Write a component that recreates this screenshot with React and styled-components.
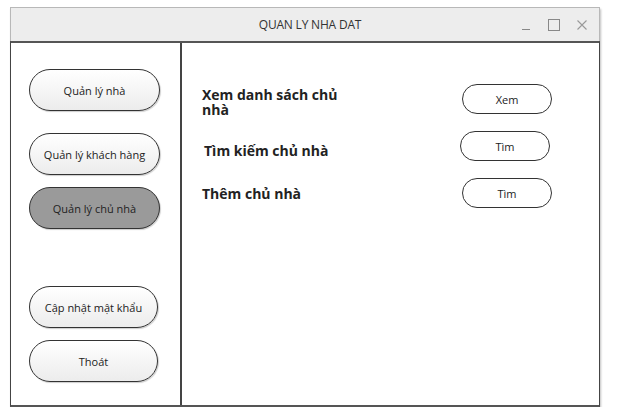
import styled, { createGlobalStyle } from "styled-components";

const GlobalStyle = createGlobalStyle`
  body {
    margin: 0;
    background: #fff;
    font-family: "Open Sans", "Noto Sans", sans-serif;
    color: #222;
  }
`;

const Window = styled.div`
  margin: 7px 0 0 10px;
  width: 590px;
  box-shadow: 1px 2px 2px rgba(0, 0, 0, 0.25);
`;

const TitleBar = styled.div`
  position: relative;
  height: 33px;
  background: #ededed;
  border: 1px solid #b8b8b8;
  border-bottom: none;
  display: flex;
  align-items: center;
  justify-content: center;
  font-size: 12px;
  color: #333;
`;

const Title = styled.span`
  margin-left: 10px;
  letter-spacing: -0.2px;
`;

const Controls = styled.div`
  position: absolute;
  right: 11px;
  top: 0;
  height: 100%;
  display: flex;
  align-items: center;
  gap: 15px;
  color: #999;
`;

const Body = styled.div`
  display: flex;
  height: 362px;
  border: 1px solid #444;
  border-top: 2px solid #555;
  border-bottom: 2px solid #555;
  background: #fff;
`;

const Sidebar = styled.div`
  width: 171px;
  border-right: 2px solid #444;
  display: flex;
  flex-direction: column;
  padding: 25px 0 0 18px;
  box-sizing: border-box;
`;

const MenuButton = styled.button`
  width: ${({ $w }) => $w || 131}px;
  height: 42px;
  margin-top: ${({ $mt }) => $mt || 0}px;
  border: 1px solid #333;
  border-radius: 21px;
  background: ${({ $active }) =>
    $active ? "#9a9a9a" : "linear-gradient(#ffffff, #ececec)"};
  box-shadow: 1px 1px 1px rgba(0, 0, 0, 0.2);
  font-family: "Open Sans", "Noto Sans", sans-serif;
  font-size: 11px;
  color: #222;
  padding: 0;
`;

const Content = styled.div`
  flex: 1;
  padding: 40px 0 0 20px;
  display: flex;
  flex-direction: column;
`;

const Row = styled.div`
  display: flex;
  align-items: center;
  margin-top: ${({ $mt }) => $mt || 0}px;
  height: 30px;
`;

const Label = styled.div`
  width: ${({ $w }) => $w}px;
  padding-left: ${({ $pl }) => $pl || 0}px;
  padding-top: ${({ $pt }) => $pt || 0}px;
  font-size: 14px;
  font-weight: 700;
  line-height: 15px;
  color: #222;
  box-sizing: border-box;
`;

const ActionButton = styled.button`
  width: 90px;
  height: 30px;
  margin-left: ${({ $ml }) => $ml}px;
  border: 1px solid #333;
  border-radius: 15px;
  background: #fff;
  font-family: "Open Sans", "Noto Sans", sans-serif;
  font-size: 11px;
  color: #222;
  padding: 0;
`;

export default function App() {
  return (
    <>
      <GlobalStyle />
      <Window>
        <TitleBar>
          <Title>QUAN LY NHA DAT</Title>
          <Controls>
            <svg width="12" height="12" viewBox="0 0 12 12">
              <path d="M2 10.5h8" stroke="#888" strokeWidth="1" />
            </svg>
            <svg width="14" height="14" viewBox="0 0 14 14">
              <rect x="1.5" y="1.5" width="11" height="11" fill="none" stroke="#888" />
            </svg>
            <svg width="12" height="12" viewBox="0 0 12 12">
              <path d="M1.5 1.5l9 9M10.5 1.5l-9 9" stroke="#999" strokeWidth="1.1" />
            </svg>
          </Controls>
        </TitleBar>
        <Body>
          <Sidebar>
            <MenuButton $mt={1}>Quản lý nhà</MenuButton>
            <MenuButton $mt={22}>Quản lý khách hàng</MenuButton>
            <MenuButton $mt={12} $active>Quản lý chủ nhà</MenuButton>
            <MenuButton $mt={57} $w={129}>Cập nhật mật khẩu</MenuButton>
            <MenuButton $mt={12} $w={129}>Thoát</MenuButton>
          </Sidebar>
          <Content>
            <Row $mt={1}>
              <Label $w={150} $pt={5}>Xem danh sách chủ nhà</Label>
              <ActionButton $ml={110}>Xem</ActionButton>
            </Row>
            <Row $mt={17}>
              <Label $w={150} $pl={2} $pt={8}>Tìm kiếm chủ nhà</Label>
              <ActionButton $ml={108}>Tìm</ActionButton>
            </Row>
            <Row $mt={17}>
              <Label $w={150} $pt={-2}>Thêm chủ nhà</Label>
              <ActionButton $ml={110}>Tìm</ActionButton>
            </Row>
          </Content>
        </Body>
      </Window>
    </>
  );
}
